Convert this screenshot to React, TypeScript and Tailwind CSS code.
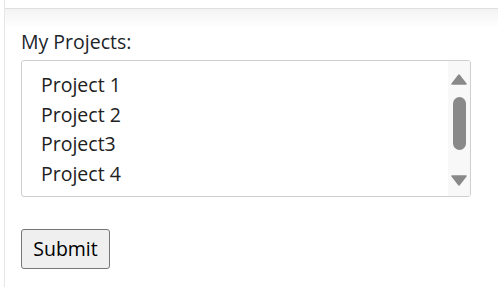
import React from "react";

const items = ["Project 1", "Project 2", "Project3", "Project 4", "Project 5"];

export default function App() {
  return (
    <div
      className="w-[498px] h-[287px] bg-white pl-[4px] overflow-hidden"
      style={{ fontFamily: '"Open Sans", "Noto Sans", sans-serif' }}
    >
      <div className="h-full border-l border-[#e6e6e6] flex flex-col">
        <div className="h-[8px] bg-white shrink-0" />
        <div className="border-t border-[#dedede] bg-gradient-to-b from-[#f3f3f3] to-white h-[20px] shrink-0" />
        <div className="pl-[16px] pr-[26px] flex flex-col">
          <div className="text-[19.5px] leading-[27px] text-[#212529]">My Projects:</div>
          <div className="mt-[5px] h-[137px] w-[450px] border border-[#cfcfcf] rounded-[3px] flex overflow-hidden">
            <div className="flex-1 overflow-hidden pl-[19px] pt-[9px] text-[19.5px] leading-[29.5px] text-[#212121]">
              {items.map((it) => (
                <div key={it} className="whitespace-nowrap">{it}</div>
              ))}
            </div>
            <div className="w-[22px] bg-[#f8f8f8] flex flex-col items-center pt-[13px] pb-[10px]">
              <svg width="16" height="11" viewBox="0 0 16 11" className="shrink-0">
                <path d="M8 1 L15 10 L1 10 Z" fill="#898989" stroke="#898989" strokeWidth="1.5" strokeLinejoin="round" />
              </svg>
              <div className="mt-[12px] w-[13px] h-[53px] rounded-full bg-[#898989]" />
              <div className="flex-1" />
              <svg width="16" height="11" viewBox="0 0 16 11" className="shrink-0">
                <path d="M1 1 L15 1 L8 10 Z" fill="#898989" stroke="#898989" strokeWidth="1.5" strokeLinejoin="round" />
              </svg>
            </div>
          </div>
          <div className="mt-[32px]">
            <button className="h-[40px] w-[89px] border border-[#767676] rounded-[3px] bg-[#efefef] text-[19.5px] text-black">
              Submit
            </button>
          </div>
        </div>
      </div>
    </div>
  );
}
